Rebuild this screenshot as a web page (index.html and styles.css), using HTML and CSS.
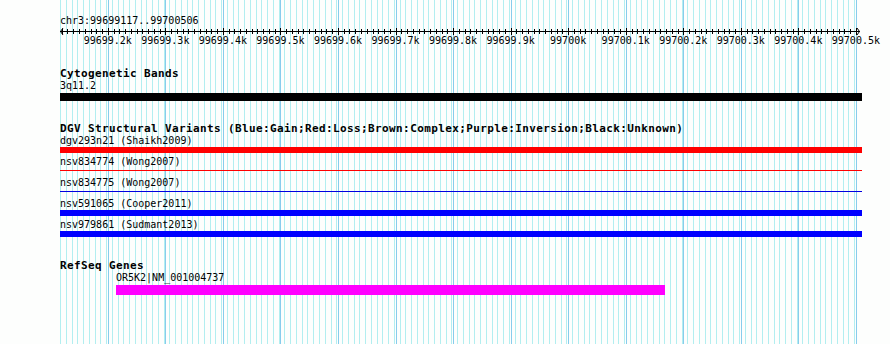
FILE: index.html
```html
<!DOCTYPE html>
<html>
<head>
<meta charset="utf-8">
<title>chr3:99699117..99700506</title>
<link rel="stylesheet" href="styles.css">
</head>
<body>
<div class="canvas">
  <svg class="grid" id="grid" width="890" height="344" shape-rendering="crispEdges"></svg>
  <div class="panel">
    <div class="loc">chr3:99699117..99700506</div>
    <svg class="axis" id="axis" width="802" height="8" shape-rendering="crispEdges">
      <rect x="0" y="4" width="800" height="1" fill="#000"/>
      <polyline points="3,1 0.5,4.5 3,8" fill="none" stroke="#000" stroke-width="1" shape-rendering="auto"/>
      <polyline points="797,1 799.5,4.5 797,8" fill="none" stroke="#000" stroke-width="1" shape-rendering="auto"/>
    </svg>
    <div class="ticklabels">
      <span>99699.2k</span><span>99699.3k</span><span>99699.4k</span><span>99699.5k</span>
      <span>99699.6k</span><span>99699.7k</span><span>99699.8k</span><span>99699.9k</span>
      <span>99700k</span><span>99700.1k</span><span>99700.2k</span><span>99700.3k</span>
      <span>99700.4k</span><span>99700.5k</span>
    </div>

    <section class="track cyto">
      <h2 class="track-title">Cytogenetic Bands</h2>
      <div class="label">3q11.2</div>
      <div class="bar band"></div>
    </section>

    <section class="track dgv">
      <h2 class="track-title">DGV Structural Variants (Blue:Gain;Red:Loss;Brown:Complex;Purple:Inversion;Black:Unknown)</h2>
      <div class="feature">
        <div class="label">dgv293n21 (Shaikh2009)</div>
        <div class="glyph"><div class="bar thick red"></div></div>
      </div>
      <div class="feature">
        <div class="label">nsv834774 (Wong2007)</div>
        <div class="glyph glyph-line"><div class="thin red"></div></div>
      </div>
      <div class="feature">
        <div class="label">nsv834775 (Wong2007)</div>
        <div class="glyph glyph-line"><div class="thin blue-line"></div></div>
      </div>
      <div class="feature">
        <div class="label">nsv591065 (Cooper2011)</div>
        <div class="glyph"><div class="bar thick blue"></div></div>
      </div>
      <div class="feature">
        <div class="label">nsv979861 (Sudmant2013)</div>
        <div class="glyph"><div class="bar thick blue"></div></div>
      </div>
    </section>

    <section class="track refseq">
      <h2 class="track-title">RefSeq Genes</h2>
      <div class="gene">
        <div class="label">OR5K2|NM_001004737</div>
        <div class="bar gene-bar"></div>
      </div>
    </section>
  </div>
</div>
<script src="script.js"></script>
</body>
</html>
```

FILE: styles.css
```css
html, body {
  margin: 0;
  padding: 0;
  background: #fdfefd;
}

.canvas {
  position: relative;
  width: 890px;
  height: 344px;
  overflow: hidden;
  font-family: "DejaVu Sans Mono", "Liberation Mono", monospace;
  font-size: 10px;
  line-height: 12px;
  color: #000;
}

.grid {
  position: absolute;
  left: 0;
  top: 0;
  z-index: 0;
}

.panel {
  position: relative;
  z-index: 1;
  margin-left: 60px;
  width: 802px;
}

.loc {
  padding-top: 15px;
  height: 12px;
  white-space: nowrap;
}

.axis {
  display: block;
}

.ticklabels {
  display: flex;
  height: 12px;
  padding-left: 19px;
  white-space: nowrap;
}

.ticklabels span {
  flex: 0 0 57.554px;
  text-align: center;
}

.track-title {
  margin: 0;
  font-size: 11px;
  font-weight: bold;
  letter-spacing: 0.38px;
  line-height: 12px;
  height: 12px;
  white-space: nowrap;
}

.label {
  height: 12px;
  white-space: nowrap;
}

.cyto {
  margin-top: 21px;
}

.bar {
  width: 802px;
}

.band {
  margin-top: 1px;
  height: 8px;
  background: #000;
}

.dgv {
  margin-top: 22px;
}

.feature {
  height: 21px;
}

.glyph {
  height: 6px;
}

.glyph-line {
  box-sizing: border-box;
  padding-top: 2px;
}

.thick {
  height: 6px;
}

.thin {
  height: 1px;
  width: 802px;
}

.red {
  background: #ff0000;
}

.blue {
  background: #0000ff;
}

.blue-line {
  background: #0000e0;
}

.refseq {
  margin-top: 20px;
}

.gene {
  margin-left: 56px;
}

.gene-bar {
  margin-top: 1px;
  width: 549px;
  height: 10px;
  background: #ff00ff;
}
```

FILE: script.js
```js
(function () {
  var NS = "http://www.w3.org/2000/svg";
  var start = 99699117;
  var scale = 800 / 1390;

  function rect(parent, x, y, w, h, fill) {
    var r = document.createElementNS(NS, "rect");
    r.setAttribute("x", x);
    r.setAttribute("y", y);
    r.setAttribute("width", w);
    r.setAttribute("height", h);
    r.setAttribute("fill", fill);
    parent.appendChild(r);
  }

  var grid = document.getElementById("grid");
  for (var k = 0; k <= 138; k++) {
    rect(grid, Math.round(60 + k * 10 * scale), 0, 1, 344, "#b2eef0");
  }
  for (var i = 0; i < 14; i++) {
    var bp = 99699200 + i * 100;
    rect(grid, Math.round(60 + (bp - start) * scale), 0, 1, 344, "#88ccec");
  }

  var axis = document.getElementById("axis");
  for (var b = 99699120; b <= 99700500; b += 10) {
    var x = Math.round((b - start) * scale);
    if (b % 100 === 0) {
      rect(axis, x, 1, 1, 7, "#000");
    } else {
      rect(axis, x, 2, 1, 5, "#000");
    }
  }
})();
```
